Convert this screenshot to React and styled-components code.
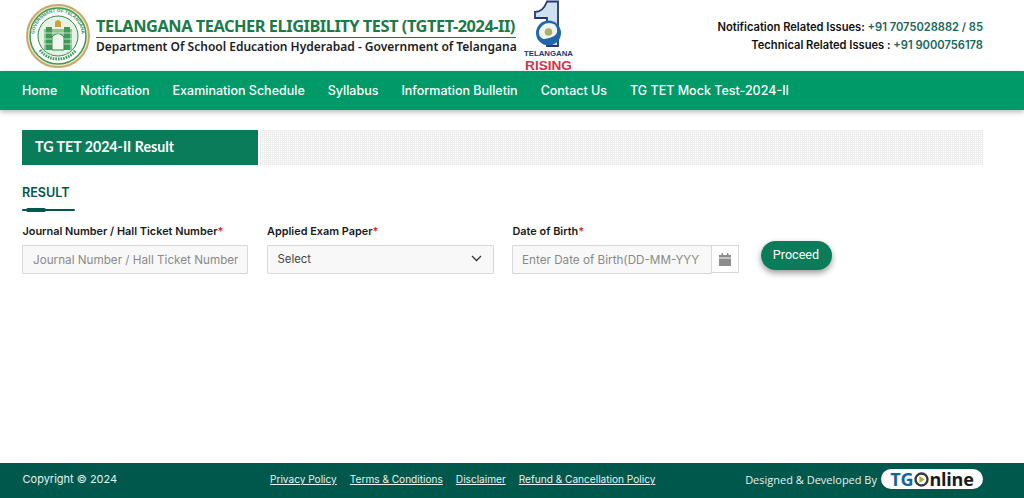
import styled, { createGlobalStyle } from 'styled-components'

const GlobalStyle = createGlobalStyle`
  html, body {
    margin: 0;
    padding: 0;
    background: #fff;
    font-family: Inter, 'Liberation Sans', sans-serif;
  }
  * {
    box-sizing: border-box;
  }
`

const Page = styled.div`
  height: 498px;
  display: flex;
  flex-direction: column;
  overflow: hidden;
`

const Header = styled.header`
  height: 71px;
  padding: 0 41px 0 26px;
  display: flex;
  align-items: flex-start;
  justify-content: space-between;
`

const Brand = styled.div`
  display: flex;
  align-items: flex-start;
`

const Seal = styled.svg`
  width: 64px;
  height: 66px;
  margin: 3px 6px 0 0;
  flex: none;
`

const BrandText = styled.div`
  width: 420px;
  padding-top: 14px;
`

const BrandTitle = styled.div`
  font-family: 'Noto Sans', sans-serif;
  font-size: 16.4px;
  line-height: 23px;
  letter-spacing: -0.48px;
  font-weight: 700;
  color: #1b7a45;
  white-space: nowrap;
  border-bottom: 1px solid #1b7a45;
`

const BrandSub = styled.div`
  font-family: 'Noto Sans', sans-serif;
  font-size: 12px;
  line-height: 17px;
  font-weight: 600;
  color: #1d1d1d;
  white-space: nowrap;
`

const Rising = styled.svg`
  width: 56px;
  height: 71px;
  margin-left: 5px;
  flex: none;
  overflow: visible;
`

const Helpdesk = styled.div`
  padding-top: 19px;
  text-align: right;
  font-size: 11.15px;
  line-height: 17.6px;
  font-weight: 600;
  color: #111;
`

const Phone = styled.span`
  color: #17685a;
`

const NavBar = styled.nav`
  height: 39px;
  background: #009a68;
  box-shadow: 0 2px 5px rgba(0, 0, 0, 0.28);
  padding: 0 22px;
  display: flex;
  align-items: center;
  gap: 23px;
`

const NavLink = styled.a`
  color: #fff;
  font-size: 12.5px;
  font-weight: 500;
  white-space: nowrap;
`

const Main = styled.main`
  flex: 1;
  padding: 20px 41px 0 22px;
`

const Banner = styled.div`
  height: 35px;
  display: flex;
`

const BannerTitle = styled.h1`
  width: 236px;
  flex: none;
  margin: 0;
  padding: 0 13px;
  background: #0a7c59;
  color: #fff;
  font-family: Lato, sans-serif;
  font-size: 14.2px;
  font-weight: 700;
  line-height: 34px;
`

const BannerPattern = styled.div`
  flex: 1;
  margin-left: 2px;
  background-image:
    linear-gradient(to right, #eeeeee 1px, transparent 1px),
    linear-gradient(to bottom, #eeeeee 1px, transparent 1px);
  background-size: 2px 2px;
`

const SectionTitle = styled.h2`
  margin: 20px 0 0;
  font-size: 12.6px;
  line-height: 15px;
  font-weight: 600;
  color: #00574b;
`

const Rule = styled.div`
  position: relative;
  width: 53px;
  height: 2px;
  margin: 9px 0 13px;
  background: #00574b;
  border-radius: 1px;

  &::before {
    content: '';
    position: absolute;
    left: 4px;
    top: -1px;
    width: 20px;
    height: 4px;
    border-radius: 2px;
    background: #00574b;
  }
`

const FormRow = styled.form`
  display: grid;
  grid-template-columns: 226px 227px 227px auto;
  column-gap: 18.5px;
  justify-content: start;
`

const Field = styled.div`
  display: flex;
  flex-direction: column;
`

const Label = styled.label`
  font-size: 10.9px;
  line-height: 14px;
  font-weight: 600;
  color: #1a1a1a;
  margin-bottom: 7px;
  white-space: nowrap;
  padding-left: 0.5px;
`

const Required = styled.span`
  color: #e0202c;
`

const TextInput = styled.input`
  width: 100%;
  min-width: 0;
  height: 29px;
  padding: 0 9px 0 10px;
  font-family: inherit;
  font-size: 11.7px;
  color: #333;
  background: #f8f8f8;
  border: 1px solid #d8d8d8;
  border-radius: 1px;

  &::placeholder {
    color: #8a8a8a;
    opacity: 1;
  }
`

const DateInput = styled(TextInput)`
  padding: 0 11px 0 9px;
`

const SelectBox = styled.div`
  height: 29px;
  padding: 0 11px 2px 10px;
  display: flex;
  align-items: center;
  justify-content: space-between;
  font-size: 11.4px;
  color: #444;
  background: #f8f8f8;
  border: 1px solid #d8d8d8;
  border-radius: 1px;
`

const InputGroup = styled.div`
  display: flex;
`

const Addon = styled.div`
  flex: none;
  width: 28px;
  height: 28px;
  margin-left: -1px;
  display: flex;
  align-items: center;
  justify-content: center;
  background: #fff;
  border: 1px solid #d8d8d8;
`

const ProceedButton = styled.button`
  align-self: start;
  width: 71px;
  height: 29px;
  margin: 17px 0 0 3px;
  border: none;
  border-radius: 15px;
  background: #0a7c59;
  color: #fff;
  font-family: Roboto, sans-serif;
  font-size: 12.6px;
  padding: 0 0 2px;
  box-shadow: 0 3px 6px rgba(0, 0, 0, 0.4);
`

const Footer = styled.footer`
  height: 35px;
  padding: 0 41px 3px 22.5px;
  background: #00574b;
  color: #e8f2ef;
  font-size: 11px;
  display: grid;
  grid-template-columns: 247.5px 1fr auto;
  align-items: center;
`

const FooterLinks = styled.div`
  display: flex;
  gap: 13px;
`

const FooterLink = styled.a`
  color: #e8f2ef;
  text-decoration: underline;
  font-size: 10.1px;
  white-space: nowrap;
`

const Credit = styled.div`
  display: flex;
  align-items: center;
  gap: 4px;
  font-family: 'Open Sans', sans-serif;
  font-size: 11px;
  white-space: nowrap;
`

const TgPill = styled.div`
  width: 102px;
  height: 20px;
  border-radius: 10px;
  background: #fff;
  display: flex;
  align-items: center;
  justify-content: center;
  font-family: 'Open Sans', sans-serif;
  font-size: 18px;
  font-weight: 700;
  color: #1a1a1a;
  letter-spacing: -0.2px;
`

const TgBlue = styled.span`
  color: #14649c;
`

const TgDot = styled.svg`
  width: 15px;
  height: 15px;
  margin-left: 1px;
`

const navItems = [
  'Home',
  'Notification',
  'Examination Schedule',
  'Syllabus',
  'Information Bulletin',
  'Contact Us',
  'TG TET Mock Test-2024-II',
]

const footerLinks = [
  'Privacy Policy',
  'Terms & Conditions',
  'Disclaimer',
  'Refund & Cancellation Policy',
]

const StateSeal = () => (
  <Seal viewBox='0 0 64 66'>
    <defs>
      <path id='sealTop' d='M10 42a23.800 23.800 0 1 1 44 0' />
    </defs>
    <circle cx='32' cy='33' r='31' fill='#efe6c8' stroke='#c9a86a' strokeWidth='2' />
    <circle cx='32' cy='33' r='28' fill='#fff' stroke='#3f9a58' strokeWidth='1.500' />
    <text fontFamily='Liberation Sans' fontSize='4.600' fontWeight='700' fill='#2f8a4c'>
      <textPath href='#sealTop' startOffset='50%' textAnchor='middle'>
        GOVERNMENT OF TELANGANA
      </textPath>
    </text>
    <path d='M14 47q7 9 18 9t18-9' fill='none' stroke='#3f9a58' strokeWidth='3' strokeDasharray='1.600 1' />
    <circle cx='32' cy='33' r='20' fill='#e6f3e4' stroke='#2f8a4c' />
    <rect x='18' y='26' width='28' height='21' fill='#8cc596' />
    <rect x='20' y='24' width='6' height='23' fill='#3f9a58' />
    <rect x='38' y='24' width='6' height='23' fill='#3f9a58' />
    <path d='M26 47V34q6-7 12 0v13z' fill='#f2f7ee' stroke='#2f8a4c' />
    <path d='M29 24v-5q3-4 6 0v5z' fill='#c9a23a' />
    <path d='M18 30h28M18 36h8M38 36h8M18 41h8M38 41h8' stroke='#e6f3e4' strokeWidth='0.800' />
  </Seal>
)

const RisingLogo = () => (
  <Rising viewBox='0 0 56 71'>
    <path d='M14 12q8 0 12-10.500h11V46H26V18H14z' fill='#cfe0f0' stroke='#24386f' strokeWidth='1.800' />
    <circle cx='27.500' cy='33' r='12.500' fill='#1f66ad' />
    <path d='M18 31q3-8 10-8t8 6q1 6-5 8t-9 2q-5-3-4-8z' fill='#f1f3ec' />
    <circle cx='27.500' cy='32' r='3.800' fill='#a7b36b' />
    <text x='27.500' y='56' textAnchor='middle' fontFamily='Liberation Sans' fontSize='7.800' fontWeight='700' fill='#22386e'>
      TELANGANA
    </text>
    <text x='27.500' y='70' textAnchor='middle' fontFamily='Liberation Sans' fontSize='13.600' fontWeight='700' fill='#d6314a'>
      RISING
    </text>
  </Rising>
)

const App = () => {
  return (
    <Page>
      <GlobalStyle />
      <Header>
        <Brand>
          <StateSeal />
          <BrandText>
            <BrandTitle>TELANGANA TEACHER ELIGIBILITY TEST (TGTET-2024-II)</BrandTitle>
            <BrandSub>Department Of School Education Hyderabad - Government of Telangana</BrandSub>
          </BrandText>
          <RisingLogo />
        </Brand>
        <Helpdesk>
          <div>
            Notification Related Issues: <Phone>+91 7075028882 / 85</Phone>
          </div>
          <div>
            Technical Related Issues : <Phone>+91 9000756178</Phone>
          </div>
        </Helpdesk>
      </Header>

      <NavBar>
        {navItems.map((item) => (
          <NavLink key={item}>{item}</NavLink>
        ))}
      </NavBar>

      <Main>
        <Banner>
          <BannerTitle>TG TET 2024-II Result</BannerTitle>
          <BannerPattern />
        </Banner>
        <SectionTitle>RESULT</SectionTitle>
        <Rule />
        <FormRow>
          <Field>
            <Label>
              Journal Number / Hall Ticket Number<Required>*</Required>
            </Label>
            <TextInput placeholder='Journal Number / Hall Ticket Number' />
          </Field>
          <Field>
            <Label>
              Applied Exam Paper<Required>*</Required>
            </Label>
            <SelectBox>
              Select
              <svg width='11' height='7' viewBox='0 0 11 7' fill='none'>
                <path d='M1 1l4.500 4.500L10 1' stroke='#333' strokeWidth='1.300' />
              </svg>
            </SelectBox>
          </Field>
          <Field>
            <Label>
              Date of Birth<Required>*</Required>
            </Label>
            <InputGroup>
              <DateInput placeholder='Enter Date of Birth(DD-MM-YYYY)' />
              <Addon>
                <svg width='12' height='13' viewBox='0 0 12 13'>
                  <path d='M2.500 0h1.600v2h3.800V0h1.600v2H12v2.600H0V2h2.500zM0 5.400h12V13H0z' fill='#8c8c8c' />
                </svg>
              </Addon>
            </InputGroup>
          </Field>
          <ProceedButton type='button'>Proceed</ProceedButton>
        </FormRow>
      </Main>

      <Footer>
        <span>Copyright © 2024</span>
        <FooterLinks>
          {footerLinks.map((link) => (
            <FooterLink key={link}>{link}</FooterLink>
          ))}
        </FooterLinks>
        <Credit>
          Designed &amp; Developed By
          <TgPill>
            <TgBlue>TG</TgBlue>
            <TgDot viewBox='0 0 14 14'>
              <circle cx='7' cy='7' r='5.600' fill='none' stroke='#33363a' strokeWidth='2.200' />
              <path d='M5 3.800 10 7l-5 3.200z' fill='#a5b52f' />
            </TgDot>
            nline
          </TgPill>
        </Credit>
      </Footer>
    </Page>
  )
}

export default App
